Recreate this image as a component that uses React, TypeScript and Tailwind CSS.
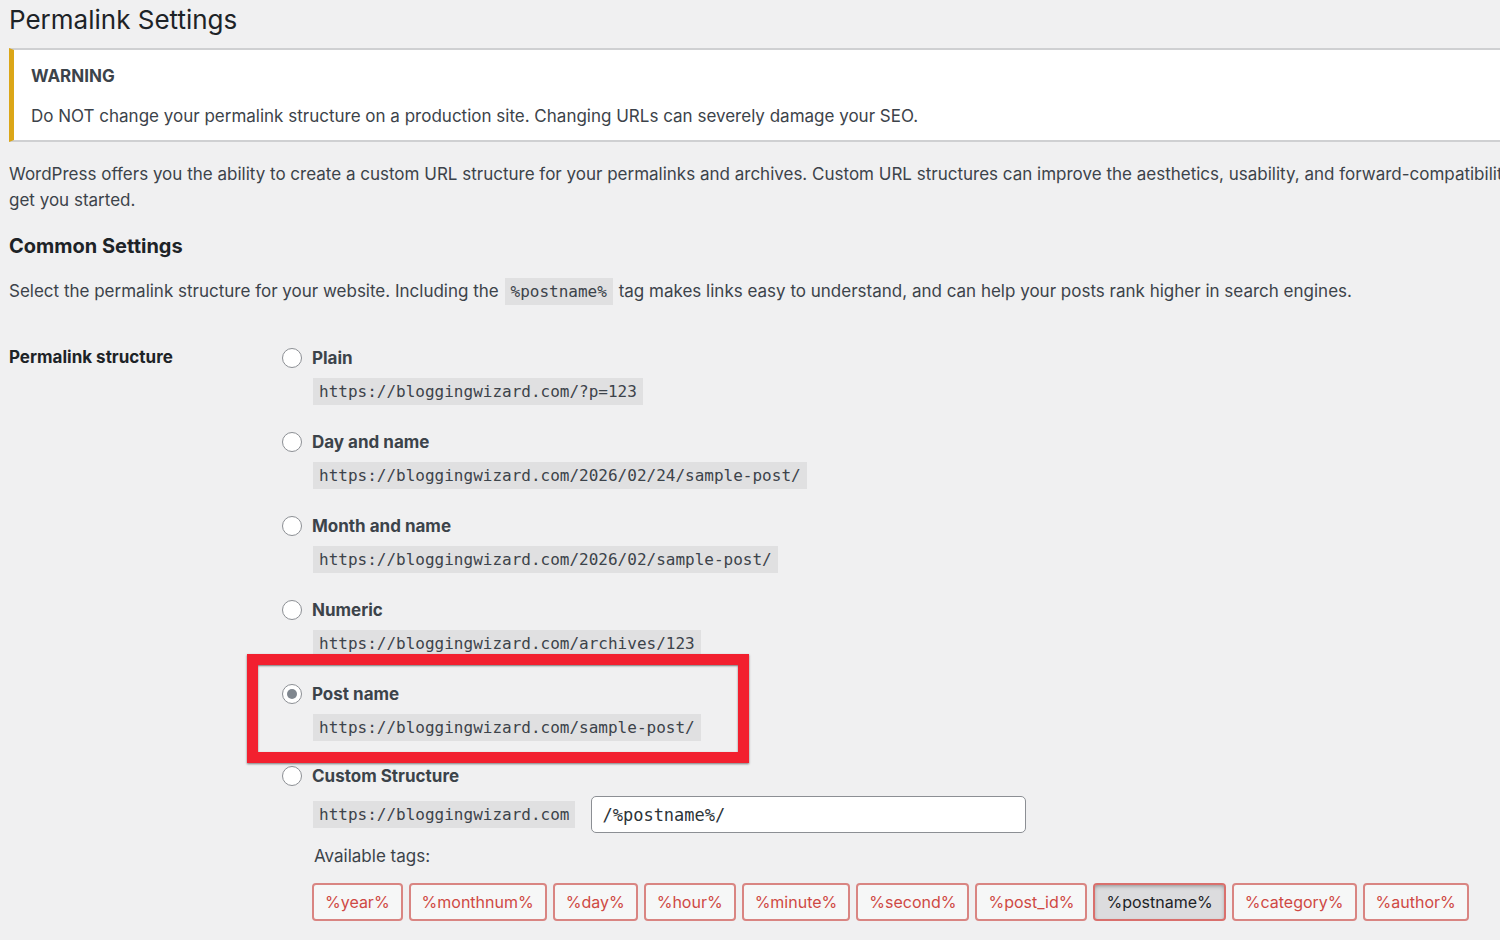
import { useState } from "react";
import type { ReactNode } from "react";

const site = "https://bloggingwizard.com";

const structures = [
  { id: "plain", label: "Plain", path: "/?p=123" },
  { id: "day-name", label: "Day and name", path: "/2026/02/24/sample-post/" },
  { id: "month-name", label: "Month and name", path: "/2026/02/sample-post/" },
  { id: "numeric", label: "Numeric", path: "/archives/123" },
  { id: "post-name", label: "Post name", path: "/sample-post/" },
];

const tags = [
  "%year%",
  "%monthnum%",
  "%day%",
  "%hour%",
  "%minute%",
  "%second%",
  "%post_id%",
  "%postname%",
  "%category%",
  "%author%",
];

function Code({ children }: { children: ReactNode }) {
  return (
    <code className="mx-px inline-block bg-[#e0e0e1] px-[6px] font-['DejaVu_Sans_Mono',monospace] text-[16px] leading-[27px]">
      {children}
    </code>
  );
}

type OptionProps = {
  id: string;
  label: string;
  checked: boolean;
  onSelect: (id: string) => void;
};

function Option({ id, label, checked, onSelect }: OptionProps) {
  return (
    <div className="flex h-[27px] items-center gap-[10px]">
      <input
        type="radio"
        name="structure"
        id={id}
        checked={checked}
        onChange={() => onSelect(id)}
        className="flex size-[20px] shrink-0 appearance-none items-center justify-center rounded-full border border-[#8c8f94] bg-white before:size-[10px] before:rounded-full checked:before:bg-[#7f868e] checked:before:content-['']"
      />
      <label htmlFor={id} className="font-bold">
        {label}
      </label>
    </div>
  );
}

export default function App() {
  const [selected, setSelected] = useState("post-name");
  const [custom, setCustom] = useState("/%postname%/");

  return (
    <main className="min-h-screen overflow-hidden bg-[#f0f0f1] pl-[9px] font-[Inter,sans-serif] text-[17px] leading-[26px] text-[#3c434a]">
      <h1 className="pt-1 text-[26px] leading-8 text-[#1d2327]">Permalink Settings</h1>

      <section className="mt-3 border-y-2 border-l-5 border-y-[#cfd0d2] border-l-[#dba617] bg-white px-[17px] pt-[13px] pb-[11px]">
        <p className="font-bold">WARNING</p>
        <p className="mt-[14px]">
          Do NOT change your permalink structure on a production site. Changing URLs can severely damage your SEO.
        </p>
      </section>

      <p className="mt-[19px] overflow-hidden whitespace-nowrap">
        WordPress offers you the ability to create a custom URL structure for your permalinks and archives. Custom URL
        structures can improve the aesthetics, usability, and forward-compatibility
        <br />
        get you started.
      </p>

      <h2 className="mt-[19px] text-[20px] leading-[28px] font-bold text-[#1d2327]">Common Settings</h2>
      <p className="mt-[18px] whitespace-nowrap">
        Select the permalink structure for your website. Including the <Code>%postname%</Code> tag makes links easy to
        understand, and can help your posts rank higher in search engines.
      </p>

      <form className="mt-[39px] flex" onSubmit={(e) => e.preventDefault()}>
        <h3 className="w-[273px] shrink-0 leading-[27px] font-bold text-[#1d2327]">Permalink structure</h3>
        <div>
          <div className="flex flex-col gap-[23px]">
            {structures.map((s) => (
              <div key={s.id} className="relative">
                <Option id={s.id} label={s.label} checked={selected === s.id} onSelect={setSelected} />
                <div className="mt-[7px] flex pl-[30px]">
                  <Code>
                    {site}
                    {s.path}
                  </Code>
                </div>
                {s.id === "post-name" && (
                  <div className="pointer-events-none absolute -top-[26px] -left-[35px] h-[109px] w-[502px] border-11 border-[#f2202f] shadow-[0_1px_2px_rgba(0,0,0,0.5),inset_0_1px_2px_rgba(0,0,0,0.5)]" />
                )}
              </div>
            ))}
          </div>

          <div className="mt-[21px]">
            <Option id="custom" label="Custom Structure" checked={selected === "custom"} onSelect={setSelected} />
            <div className="mt-[7px] flex items-center gap-[15px] pl-[30px]">
              <Code>{site}</Code>
              <input
                type="text"
                aria-label="Custom permalink structure"
                value={custom}
                onChange={(e) => setCustom(e.target.value)}
                className="h-[37px] w-[435px] rounded-[5px] border border-[#8c8f94] bg-white px-[10px] font-['DejaVu_Sans_Mono',monospace] text-[17px] text-[#2c3338]"
              />
            </div>
            <p className="mt-[10px] pl-[32px]">Available tags:</p>
            <div className="mt-[14px] flex gap-[6px] pl-[30px]">
              {tags.map((tag) => (
                <button
                  key={tag}
                  type="button"
                  aria-pressed={custom.includes(tag)}
                  className="h-[38px] rounded-[4px] border-2 border-[#d98582] bg-[#f6f7f7] px-[11px] text-[16px] text-[#cf4944] aria-pressed:border-[#d9706d] aria-pressed:bg-[#dcdcde] aria-pressed:text-[#1d2327] aria-pressed:shadow-[inset_0_2px_5px_-2px_rgba(0,0,0,0.5)]"
                >
                  {tag}
                </button>
              ))}
            </div>
          </div>
        </div>
      </form>
    </main>
  );
}
